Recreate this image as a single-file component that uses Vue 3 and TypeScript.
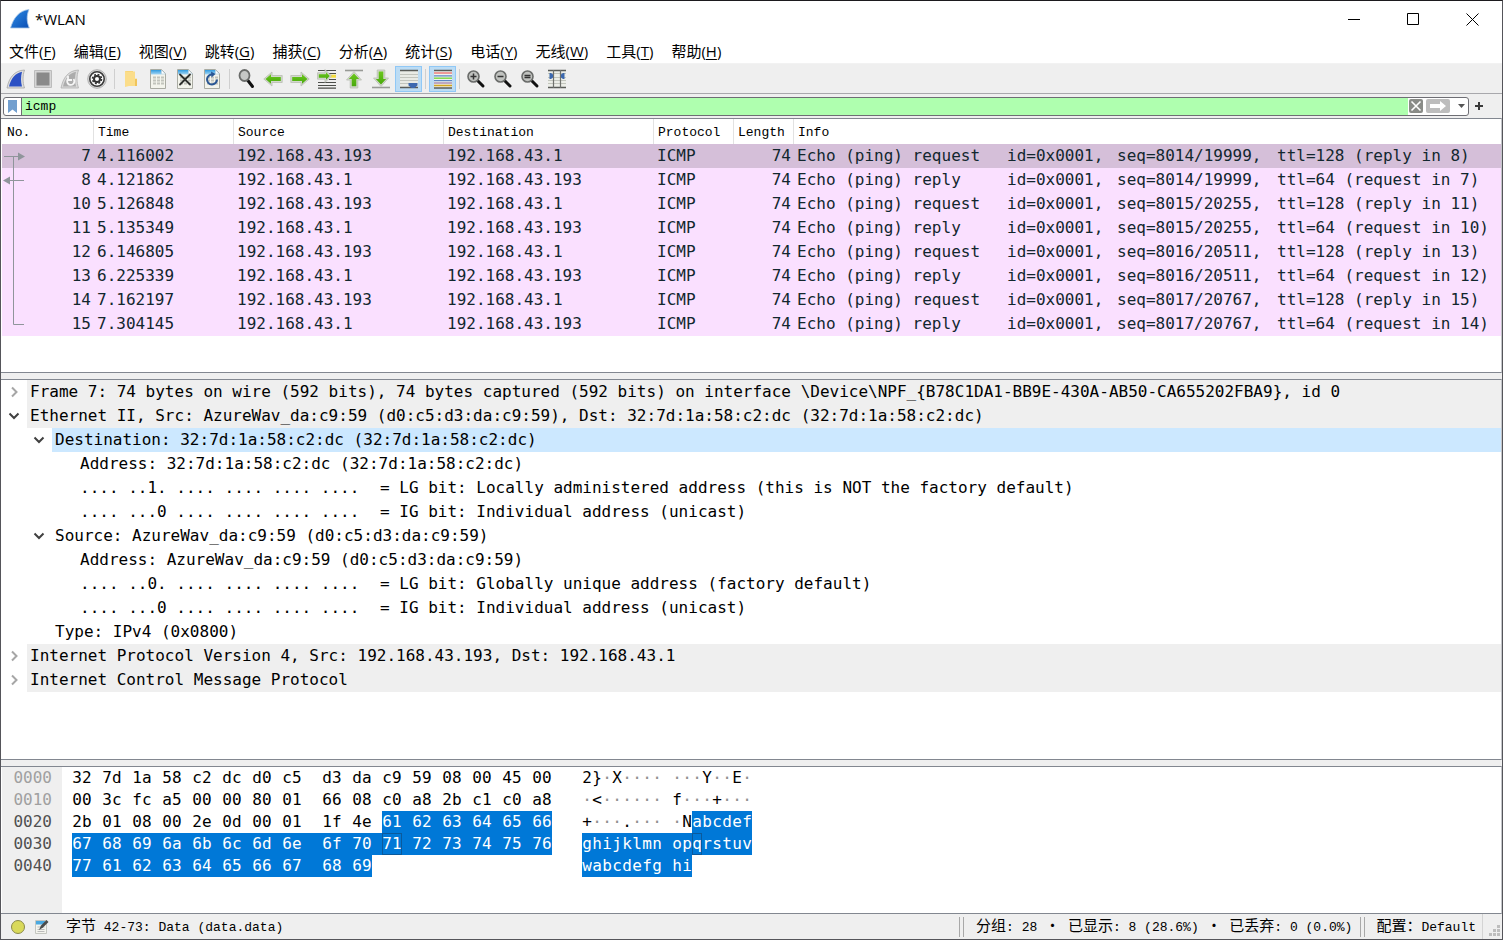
<script setup lang="ts">
import { ref } from 'vue'

interface MenuEntry { label: string; key: string }
interface Packet { no: number; time: string; src: string; dst: string; kind: string; seq: string; ttl: string }
interface TreeLine { text: string; bits?: string; depth: number; state: 'open' | 'closed' | 'leaf'; shade?: boolean; active?: boolean }
interface ByteCell { hex: string; char: string; dot: boolean; selected: boolean; joined: boolean; focus: boolean }

const menus: MenuEntry[] = [
  { label: '文件', key: 'F' },
  { label: '编辑', key: 'E' },
  { label: '视图', key: 'V' },
  { label: '跳转', key: 'G' },
  { label: '捕获', key: 'C' },
  { label: '分析', key: 'A' },
  { label: '统计', key: 'S' },
  { label: '电话', key: 'Y' },
  { label: '无线', key: 'W' },
  { label: '工具', key: 'T' },
  { label: '帮助', key: 'H' },
]

const filter = ref('icmp')

const host = '192.168.43.193'
const gateway = '192.168.43.1'

const request = (no: number, time: string, seq: string, peer: number): Packet => ({
  no, time, seq, src: host, dst: gateway, kind: 'request', ttl: `ttl=128 (reply in ${peer})`,
})
const reply = (no: number, time: string, seq: string, peer: number): Packet => ({
  no, time, seq, src: gateway, dst: host, kind: 'reply', ttl: `ttl=64 (request in ${peer})`,
})

const packets: Packet[] = [
  request(7, '4.116002', '8014/19999', 8),
  reply(8, '4.121862', '8014/19999', 7),
  request(10, '5.126848', '8015/20255', 11),
  reply(11, '5.135349', '8015/20255', 10),
  request(12, '6.146805', '8016/20511', 13),
  reply(13, '6.225339', '8016/20511', 12),
  request(14, '7.162197', '8017/20767', 15),
  reply(15, '7.304145', '8017/20767', 14),
]
const selectedNo = ref(7)

const tree: TreeLine[] = [
  { text: 'Frame 7: 74 bytes on wire (592 bits), 74 bytes captured (592 bits) on interface \\Device\\NPF_{B78C1DA1-BB9E-430A-AB50-CA655202FBA9}, id 0', depth: 0, state: 'closed', shade: true },
  { text: 'Ethernet II, Src: AzureWav_da:c9:59 (d0:c5:d3:da:c9:59), Dst: 32:7d:1a:58:c2:dc (32:7d:1a:58:c2:dc)', depth: 0, state: 'open', shade: true },
  { text: 'Destination: 32:7d:1a:58:c2:dc (32:7d:1a:58:c2:dc)', depth: 1, state: 'open', active: true },
  { text: 'Address: 32:7d:1a:58:c2:dc (32:7d:1a:58:c2:dc)', depth: 2, state: 'leaf' },
  { bits: '.... ..1. .... .... .... ....', text: '= LG bit: Locally administered address (this is NOT the factory default)', depth: 2, state: 'leaf' },
  { bits: '.... ...0 .... .... .... ....', text: '= IG bit: Individual address (unicast)', depth: 2, state: 'leaf' },
  { text: 'Source: AzureWav_da:c9:59 (d0:c5:d3:da:c9:59)', depth: 1, state: 'open' },
  { text: 'Address: AzureWav_da:c9:59 (d0:c5:d3:da:c9:59)', depth: 2, state: 'leaf' },
  { bits: '.... ..0. .... .... .... ....', text: '= LG bit: Globally unique address (factory default)', depth: 2, state: 'leaf' },
  { bits: '.... ...0 .... .... .... ....', text: '= IG bit: Individual address (unicast)', depth: 2, state: 'leaf' },
  { text: 'Type: IPv4 (0x0800)', depth: 1, state: 'leaf' },
  { text: 'Internet Protocol Version 4, Src: 192.168.43.193, Dst: 192.168.43.1', depth: 0, state: 'closed', shade: true },
  { text: 'Internet Control Message Protocol', depth: 0, state: 'closed', shade: true },
]

const bytes = (
  '32 7d 1a 58 c2 dc d0 c5 d3 da c9 59 08 00 45 00 ' +
  '00 3c fc a5 00 00 80 01 66 08 c0 a8 2b c1 c0 a8 ' +
  '2b 01 08 00 2e 0d 00 01 1f 4e 61 62 63 64 65 66 ' +
  '67 68 69 6a 6b 6c 6d 6e 6f 70 71 72 73 74 75 76 ' +
  '77 61 62 63 64 65 66 67 68 69'
).split(' ')
const dataStart = 42
const focusByte = 58

const dump = Array.from({ length: Math.ceil(bytes.length / 16) }, (_, r) => {
  const start = r * 16
  const cells: ByteCell[] = bytes.slice(start, start + 16).map((hex, i) => {
    const index = start + i
    const code = parseInt(hex, 16)
    const dot = code <= 32 || code >= 127
    return {
      hex,
      char: dot ? '·' : String.fromCharCode(code),
      dot,
      selected: index >= dataStart,
      joined: i > 0 && index > dataStart,
      focus: index === focusByte,
    }
  })
  return { offset: start.toString(16).padStart(4, '0'), current: start + 15 >= dataStart, cells }
})
</script>

<template>
  <div class="window">
    <svg class="defs" width="0" height="0" aria-hidden="true">
      <defs>
        <linearGradient id="finBlue" x1="0" y1="0" x2="1" y2="1">
          <stop offset="0" stop-color="#2f8ee6" /><stop offset="1" stop-color="#0a4db4" />
        </linearGradient>
        <linearGradient id="sheet" x1="0" y1="0" x2="0" y2="1">
          <stop offset="0" stop-color="#2f9be0" /><stop offset="1" stop-color="#a6d6f2" />
        </linearGradient>
        <linearGradient id="leaf" x1="0" y1="0" x2="0" y2="1">
          <stop offset="0" stop-color="#6cc81e" /><stop offset="1" stop-color="#48a80c" />
        </linearGradient>
        <g id="page">
          <path d="M2.500.500h11l4 4v15h-15z" fill="#f3f4ec" stroke="#a9aba2" />
          <path d="M3 1h10.500v4.500H3z" fill="url(#sheet)" />
          <path d="M13.500 1v4h4z" fill="#fff" stroke="#a9c8da" stroke-width=".6" />
        </g>
        <g id="pageGrid" fill="#c2c4bc">
          <path d="M5 7.500h3v2H5zM9 7.500h3v2H9zM13 7.500h3v2h-3zM5 10.500h3v2H5zM9 10.500h3v2H9zM13 10.500h3v2h-3zM5 13.500h3v2H5zM9 13.500h3v2H9zM13 13.500h3v2h-3z" />
        </g>
        <g id="lens">
          <path d="M11.500 11.500l5.500 5.500" stroke="#111" stroke-width="3" stroke-linecap="round" />
          <circle cx="7.500" cy="7.500" r="5.500" fill="#c0c2bf" stroke="#6a6c6a" stroke-width="1.600" />
        </g>
      </defs>
    </svg>

    <header class="titlebar">
      <svg class="logo" width="20" height="20" viewBox="0 0 20 20" aria-hidden="true">
        <path d="M.500 19C3.500 9 9 1.500 19 .500c-2.500 6-2.500 12 .300 18.500z" fill="url(#finBlue)" stroke="#a9c6e6" stroke-width=".8" />
      </svg>
      <h1>*WLAN</h1>
      <div class="controls">
        <button type="button" aria-label="最小化"><svg width="13" height="13"><path d="M0 6.500h12" /></svg></button>
        <button type="button" aria-label="最大化"><svg width="13" height="13"><path d="M.500.500h11v11h-11z" /></svg></button>
        <button type="button" aria-label="关闭"><svg width="13" height="13"><path d="M.500.500l12 12M12.500.500l-12 12" /></svg></button>
      </div>
    </header>

    <nav class="menubar">
      <button v-for="m in menus" :key="m.key" type="button">{{ m.label }}(<u>{{ m.key }}</u>)</button>
    </nav>

    <div class="toolbar" role="toolbar">
      <button type="button" aria-label="开始捕获">
        <svg viewBox="0 0 20 20"><path d="M1 19C3 9 8 1.500 18.500 1c-2 6-2 12 0 18z" fill="#dedede" stroke="#a5a5a5" stroke-width=".8" /><path d="M3 17.500C5 9.500 9.500 4 16 2.800c-1.300 5-1.300 10 0 14.700z" fill="#2b50c4" /></svg>
      </button>
      <button type="button" aria-label="停止捕获">
        <svg viewBox="0 0 20 20"><path d="M1.500 1.500h17v17h-17z" fill="#d6d6d6" stroke="#bcbcbc" /><path d="M3.500 3.500h13v13h-13z" fill="#8a8a8a" /></svg>
      </button>
      <button type="button" aria-label="重新开始">
        <svg viewBox="0 0 20 20"><path d="M1 19C3 9 8 1.500 18.500 1c-2 6-2 12 0 18z" fill="#dadada" stroke="#b0b0b0" stroke-width=".8" /><path d="M3 17.500C5 9.500 9.500 4 16 2.800c-1.300 5-1.300 10 0 14.700z" fill="#acacac" /><path d="M8.500 9.500a3.600 3.600 0 1 0 5 .500M8 7v4h4" fill="none" stroke="#f6f6f6" stroke-width="1.800" /></svg>
      </button>
      <button type="button" aria-label="捕获选项">
        <svg viewBox="0 0 20 20"><circle cx="10" cy="10" r="9.300" fill="#dcdcdc" stroke="#a2a2a2" stroke-width=".8" /><circle cx="10" cy="10" r="7.200" fill="#fff" stroke="#3a3a3a" stroke-width="1.600" /><circle cx="10" cy="10" r="4.500" fill="none" stroke="#333" stroke-width="1.600" stroke-dasharray="1.900 1.634" /><circle cx="10" cy="10" r="3" fill="none" stroke="#333" stroke-width="2" /></svg>
      </button>
      <i class="sep" />
      <button type="button" aria-label="打开">
        <svg viewBox="0 0 20 20"><path d="M4 2h8v15H4z" fill="#f5cc66" /><path d="M6 2.500h8v7h2V17H8l-4 1V2z" fill="#fbdd8a" /><path d="M14 10v7h2v-7z" fill="#f0c45a" /></svg>
      </button>
      <button type="button" aria-label="保存"><svg viewBox="0 0 20 20"><use href="#page" /><use href="#pageGrid" /></svg></button>
      <button type="button" aria-label="关闭文件">
        <svg viewBox="0 0 20 20"><use href="#page" /><use href="#pageGrid" /><path d="M5 5.500l10 10M15 5.500l-10 10" stroke="#2c2e2c" stroke-width="1.800" stroke-linecap="round" /></svg>
      </button>
      <button type="button" aria-label="重新加载">
        <svg viewBox="0 0 20 20"><use href="#page" /><use href="#pageGrid" /><path d="M10.500 5.500A5 5 0 1 0 15 10.500" fill="none" stroke="#2a5794" stroke-width="2" /><path d="M9 2.500L13.500 5 9.500 8.500z" fill="#2a5794" /></svg>
      </button>
      <i class="sep" />
      <button type="button" aria-label="查找">
        <svg viewBox="0 0 20 20"><path d="M11.500 11l5 6.500" stroke="#111" stroke-width="3" stroke-linecap="round" /><ellipse cx="8.500" cy="6.500" rx="5" ry="5.500" fill="#c6c8c6" stroke="#6a6c6a" stroke-width="1.800" /></svg>
      </button>
      <button type="button" aria-label="后退">
        <svg viewBox="0 0 20 20"><path d="M.800 10L9 3v3.500h10.200v7H9V17z" fill="#d3d8cd" stroke="#b9beb3" stroke-width=".8" stroke-linejoin="round" /><path d="M2.500 10L8 5.200V8h9.800v4H8v2.800z" fill="url(#leaf)" /></svg>
      </button>
      <button type="button" aria-label="前进">
        <svg viewBox="0 0 20 20"><path d="M19.200 10L11 3v3.500H.800v7H11V17z" fill="#d3d8cd" stroke="#b9beb3" stroke-width=".8" stroke-linejoin="round" /><path d="M17.500 10L12 5.200V8H2.200v4H12v2.800z" fill="url(#leaf)" /></svg>
      </button>
      <button type="button" aria-label="转到分组">
        <svg viewBox="0 0 20 20"><path d="M1 1.500h18M1 13.500h18M1 16.500h18M1 19.200h18" stroke="#4c4e4a" stroke-width="1.200" /><path d="M12 4.500h7M12 10.500h7" stroke="#4c4e4a" /><path d="M13 7.200h6" stroke="#f4dc3c" stroke-width="3" /><path d="M14.500 7L8 .500v3.300H.500v6.400H8v3.300z" fill="#d3d8cd" stroke="#b4b8b0" stroke-width=".7" /><path d="M12.800 7L9 3.200v2H1.800v3.600H9v2z" fill="url(#leaf)" /></svg>
      </button>
      <button type="button" aria-label="首个分组">
        <svg viewBox="0 0 20 20"><path d="M1 1.500h18" stroke="#989a96" stroke-width="1.600" /><path d="M10 2.500L2.500 11h3.700v8h7.600v-8h3.700z" fill="#d3d8cd" stroke="#b9beb3" stroke-width=".8" /><path d="M10 4.500L4.800 10h2.900v7.300h4.600V10h2.900z" fill="url(#leaf)" /></svg>
      </button>
      <button type="button" aria-label="最新分组">
        <svg viewBox="0 0 20 20"><path d="M1 18.500h18" stroke="#989a96" stroke-width="1.600" /><path d="M10 17.500L2.500 9h3.700V1h7.600v8h3.700z" fill="#d3d8cd" stroke="#b9beb3" stroke-width=".8" /><path d="M10 15.500L4.800 10h2.900V2.500h4.600V10h2.900z" fill="url(#leaf)" /></svg>
      </button>
      <button type="button" class="checked" aria-pressed="true" aria-label="自动滚动">
        <svg viewBox="0 0 20 20"><path d="M1 2h18v16H1z" fill="#e9ebe5" /><path d="M1 1.500h18M1 18.500h18" stroke="#5a5c58" stroke-width="1.300" /><path d="M1 5.500h18M1 8.500h18M1 11.500h18M1 14.500h9" stroke="#c2c5bd" /><path d="M9.500 14h9v2.500L15.500 19h-3l-3-2.500z" fill="#3c68ae" /></svg>
      </button>
      <i class="sep" />
      <button type="button" class="checked" aria-pressed="true" aria-label="着色">
        <svg viewBox="0 0 20 20"><path d="M1 1h18v18H1z" fill="#f1f3ee" /><path d="M1 1.500h18M1 19h18" stroke="#5a5c58" stroke-width="1.300" /><path d="M1 4h18" stroke="#ef6a6a" stroke-width="1.300" /><path d="M1 6.800h18M1 11.600h18" stroke="#5d86c4" stroke-width="1.200" /><path d="M1 9.200h18" stroke="#80d84a" stroke-width="1.500" /><path d="M1 14h18" stroke="#9a76a6" stroke-width="1.200" /><path d="M1 16.500h18" stroke="#d0a520" stroke-width="1.600" /></svg>
      </button>
      <i class="sep" />
      <button type="button" aria-label="放大"><svg viewBox="0 0 20 20"><use href="#lens" /><path d="M4.500 7.500h6M7.500 4.500v6" stroke="#333" stroke-width="1.500" /></svg></button>
      <button type="button" aria-label="缩小"><svg viewBox="0 0 20 20"><use href="#lens" /><path d="M4.500 7.500h6" stroke="#333" stroke-width="1.500" /></svg></button>
      <button type="button" aria-label="正常大小"><svg viewBox="0 0 20 20"><use href="#lens" /><path d="M4.500 6.500h6M4.500 8.500h6" stroke="#333" stroke-width="1.300" /></svg></button>
      <button type="button" aria-label="调整列宽">
        <svg viewBox="0 0 20 20"><path d="M1 1h18v18H1z" fill="#eceee8" /><path d="M1 1.500h18M1 18.500h18" stroke="#5a5c58" stroke-width="1.300" /><path d="M1 4.500h18M1 8.500h18M1 11.500h18M1 14.500h18" stroke="#c2c5bd" /><path d="M6.500 1v18M13.500 1v18" stroke="#6f716d" stroke-width="1.200" /><path d="M2.500 4H4l2 1.500v3L4 10H2.500zM17.500 4H16l-2 1.500v3l2 1.500h1.500z" fill="#3c68ae" /></svg>
      </button>
    </div>

    <form class="filterbar" @submit.prevent>
      <div class="filterbox">
        <button type="button" class="bookmark" aria-label="书签"><svg width="9" height="13"><path d="M0 0h9v13L4.500 9.500 0 13z" fill="#729fcf" /></svg></button>
        <input v-model="filter" type="text" aria-label="显示过滤器" spellcheck="false">
        <button type="button" class="clear" aria-label="清除"><svg width="14" height="14"><path d="M2.500 2.500l9 9M11.500 2.500l-9 9" stroke="#fff" stroke-width="1.600" /></svg></button>
        <button type="submit" class="apply" aria-label="应用"><svg width="16" height="10"><path d="M0 3h10V0l6 5-6 5V7H0z" fill="#fff" /></svg></button>
        <button type="button" class="recent" aria-label="最近的过滤器"><svg width="7" height="4"><path d="M0 0h7L3.500 4z" fill="#555" /></svg></button>
      </div>
      <button type="button" class="add" aria-label="添加过滤器"><svg width="8" height="8"><path d="M0 4h8M4 0v8" stroke="#3a3a3a" stroke-width="2" /></svg></button>
    </form>

    <main class="panes">
      <section class="pane list">
        <table>
          <colgroup>
            <col class="c-no"><col class="c-time"><col class="c-addr"><col class="c-addr"><col class="c-proto"><col class="c-len"><col>
          </colgroup>
          <thead>
            <tr><th>No.</th><th>Time</th><th>Source</th><th>Destination</th><th>Protocol</th><th>Length</th><th>Info</th></tr>
          </thead>
          <tbody>
            <tr v-for="p in packets" :key="p.no" :class="{ selected: p.no === selectedNo }" @click="selectedNo = p.no">
              <td class="num">{{ p.no }}</td>
              <td>{{ p.time }}</td>
              <td>{{ p.src }}</td>
              <td>{{ p.dst }}</td>
              <td>ICMP</td>
              <td class="num">74</td>
              <td><div class="info"><span>Echo (ping) {{ p.kind }}</span><span>id=0x0001,</span><span>seq={{ p.seq }},</span><span>{{ p.ttl }}</span></div></td>
            </tr>
          </tbody>
        </table>
        <svg class="related" width="26" height="192" aria-hidden="true">
          <path d="M2 12.500h16M11.500 12.500v168h10.500M8 36.500h14" fill="none" stroke="#8f959b" />
          <path d="M16 8.500l7 4-7 4zM8 32.500l-7 4 7 4z" fill="#8f959b" />
        </svg>
      </section>

      <section class="pane details">
        <div v-for="(line, i) in tree" :key="i" class="line" :class="['d' + line.depth, { shade: line.shade, active: line.active }]">
          <button v-if="line.state !== 'leaf'" type="button" class="toggle" :class="line.state" :aria-label="line.state === 'open' ? '折叠' : '展开'">
            <svg v-if="line.state === 'open'" width="12" height="12"><path d="M1.500 3.500L6 8l4.500-4.500" /></svg>
            <svg v-else width="12" height="12"><path d="M4 1.500L8.500 6 4 10.500" /></svg>
          </button>
          <span v-else class="toggle" />
          <span class="label"><span v-if="line.bits" class="bits">{{ line.bits }}</span>{{ line.text }}</span>
        </div>
      </section>

      <section class="pane dump">
        <div class="offsets">
          <div v-for="r in dump" :key="r.offset" :class="{ current: r.current }">{{ r.offset }}</div>
        </div>
        <div class="hex">
          <div v-for="r in dump" :key="r.offset" class="bytes">
            <span v-for="(c, i) in r.cells" :key="i" class="gap" :class="{ sel: c.joined }"><span class="byte" :class="{ sel: c.selected, focus: c.focus }">{{ c.hex }}</span></span>
          </div>
        </div>
        <div class="ascii">
          <div v-for="r in dump" :key="r.offset" class="bytes">
            <span v-for="(c, i) in r.cells" :key="i" class="gap" :class="{ sel: c.joined }"><span class="char" :class="{ sel: c.selected, focus: c.focus, dot: c.dot }">{{ c.char }}</span></span>
          </div>
        </div>
      </section>
    </main>

    <footer class="status">
      <button type="button" class="expert" aria-label="专家信息"><svg width="16" height="16"><circle cx="8" cy="8" r="6.500" fill="#d9d95a" stroke="#8a8a4a" /></svg></button>
      <button type="button" class="comment" aria-label="捕获文件注释">
        <svg width="16" height="16"><path d="M1.500 1.500h11v13h-11z" fill="#f4f4ee" stroke="#c4c6c0" /><path d="M2 2h9v3.500H2z" fill="#4aa8e0" /><path d="M3.500 8h7M3.500 10.500h7M3.500 12.500h7" stroke="#bbb" /><path d="M5 11l2-4.500L12.500 1l2 2L9 8.500z" fill="#4a4c4a" /></svg>
      </button>
      <span class="field"><b>字节</b> 42-73: Data (data.data)</span>
      <i class="grip" />
      <span class="counts"><b>分组</b>: 28 <b class="mid">·</b> <b>已显示</b>: 8 (28.6%) <b class="mid">·</b> <b>已丢弃</b>: 0 (0.0%)</span>
      <i class="grip" />
      <button type="button" class="profile"><b>配置：</b>Default</button>
      <svg class="sizer" width="11" height="11"><path d="M8 0h3v3H8zM4 4h3v3H4zM8 4h3v3H8zM0 8h3v3H0zM4 8h3v3H4zM8 8h3v3H8z" fill="#bdbdbd" /></svg>
    </footer>
  </div>
</template>

<style>
body {
  margin: 0;
}
</style>

<style scoped>
* {
  box-sizing: border-box;
}
.window {
  display: flex;
  flex-direction: column;
  height: 100vh;
  border: 1px solid #55555a;
  border-top-color: #1c1a1e;
  background: #efefef;
  color: #000;
  overflow: hidden;
  font: 15px/20px "Open Sans", "Noto Sans CJK SC", sans-serif;
}
.defs {
  position: absolute;
}
button {
  display: flex;
  align-items: center;
  justify-content: center;
  margin: 0;
  padding: 0;
  border: 0;
  background: none;
  color: inherit;
  font: inherit;
}
svg {
  display: block;
  flex: none;
}

.titlebar {
  display: flex;
  align-items: center;
  height: 36px;
  flex: none;
  padding-left: 9px;
  background: #fff;
}
.titlebar h1 {
  flex: 1;
  margin: 0 0 0 5px;
  font-size: 15px;
  font-weight: 400;
}
.controls {
  display: flex;
}
.controls button {
  width: 59px;
  height: 36px;
}
.controls svg {
  fill: none;
  stroke: #000;
}

.menubar {
  display: flex;
  gap: 18px;
  flex: none;
  height: 27px;
  padding: 2px 0 0 8px;
  background: #fff;
  border-bottom: 1px solid #f2f2f2;
}
.menubar button {
  display: block;
  white-space: nowrap;
}
.menubar u {
  text-underline-offset: 2px;
}

.toolbar {
  display: flex;
  align-items: center;
  flex: none;
  height: 30px;
  padding-left: 2px;
  border-bottom: 1px solid #a8a8ac;
}
.toolbar button {
  justify-content: flex-start;
  width: 27px;
  height: 26px;
  padding-left: 3px;
}
.toolbar svg {
  width: 20px;
  height: 20px;
}
.toolbar .checked {
  padding-left: 3px;
  background: #bcdcf4;
  border: 1px solid #90c8f6;
}
.sep {
  width: 1px;
  height: 20px;
  margin: 0 3px;
  background: #cfcfcf;
}

.filterbar {
  display: flex;
  align-items: center;
  flex: none;
  height: 24px;
  padding-left: 2px;
}
.filterbox {
  display: flex;
  align-items: center;
  flex: 1;
  height: 19px;
  border: 1px solid #6e6e74;
  border-radius: 3px;
  background: #fff;
  overflow: hidden;
}
.bookmark {
  width: 18px;
  height: 17px;
  border-right: 1px solid #6e6e74;
}
.filterbox input {
  flex: 1;
  min-width: 0;
  height: 17px;
  padding: 0 3px;
  border: 0;
  outline: 0;
  background: #afffaf;
  color: #000;
  font: 13px/17px "Liberation Mono", monospace;
}
.clear {
  width: 14px;
  height: 14px;
  margin: 0 3px 0 1px;
  border-radius: 2px;
  background: #8a8c88;
}
.apply {
  width: 24px;
  height: 14px;
  border-radius: 2px;
  background: #bdbdbd;
}
.recent {
  width: 18px;
  height: 17px;
  padding-left: 4px;
}
.add {
  width: 33px;
  height: 20px;
  padding-right: 13px;
}

.panes {
  display: flex;
  flex-direction: column;
  flex: 1;
  gap: 6px;
  min-height: 0;
}
.pane {
  position: relative;
  min-height: 0;
  padding-left: 1px;
  border: 1px solid #828790;
  border-left-width: 0;
  border-right-color: #c4c6ca;
  background: #fff;
  overflow: hidden;
  font: 16px/24px "DejaVu Sans Mono", monospace;
}
.list {
  flex: 255 1 0;
}
.details {
  flex: 381 1 0;
}
.dump {
  flex: 147 1 0;
}

table {
  width: 100%;
  table-layout: fixed;
  border-collapse: collapse;
}
.c-no {
  width: 91px;
}
.c-time {
  width: 140px;
}
.c-addr {
  width: 210px;
}
.c-proto {
  width: 80px;
}
.c-len {
  width: 60px;
}
th {
  height: 25px;
  padding: 2px 0 0 5px;
  box-shadow: inset 1px 0 #e2e2e2;
  font: 13px/22px "Liberation Mono", monospace;
  text-align: left;
}
th:first-child {
  box-shadow: none;
}
td {
  height: 24px;
  padding: 0 0 0 4px;
  white-space: pre;
}
.num {
  padding-right: 2px;
  text-align: right;
}
.info {
  display: grid;
  grid-template-columns: 210px 110px 160px auto;
}
tbody tr {
  background: #fae0ff;
  color: #12272e;
}
tbody tr.selected {
  background: #d5bfd9;
}
.related {
  position: absolute;
  left: 1px;
  top: 25px;
}

.line {
  display: flex;
  height: 24px;
}
.d1 {
  padding-left: 25px;
}
.d2 {
  padding-left: 50px;
}
.toggle {
  width: 25px;
  height: 24px;
  padding-right: 1px;
}
.toggle svg {
  fill: none;
  stroke: #404040;
  stroke-width: 2;
}
.toggle.closed svg {
  stroke: #a6a6a6;
}
.label {
  flex: 1;
  padding-left: 3px;
  white-space: pre;
}
.bits {
  display: inline-block;
  width: 300px;
}
.shade .label {
  background: #efefef;
}
.active .label {
  background: #cce8ff;
}

.dump {
  display: flex;
  line-height: 22px;
}
.offsets {
  width: 60px;
  padding-right: 10px;
  background: #efefef;
  color: #a0a0a0;
  text-align: right;
}
.offsets .current {
  color: #505050;
}
.hex {
  width: 490px;
  margin-right: 30px;
}
.bytes {
  display: flex;
  height: 22px;
}
.hex .gap {
  padding-left: 10px;
}
.hex .gap:nth-child(9) {
  padding-left: 20px;
}
.ascii .gap:nth-child(9) {
  padding-left: 10px;
}
.byte,
.char {
  display: block;
  width: 20px;
  height: 22px;
  text-align: center;
}
.char {
  width: 10px;
}
.dot {
  color: #909090;
}
.sel {
  background: #0078d7;
  color: #fff;
}
.focus {
  outline: 1px solid #0a5a9c;
  outline-offset: -1px;
}

.status {
  display: flex;
  align-items: center;
  flex: none;
  height: 25px;
  padding: 0 2px 0 9px;
  font: 13px/24px "Liberation Mono", "Noto Sans CJK SC", monospace;
  white-space: pre;
}
.status b {
  font: 15px/24px "Noto Sans CJK SC", sans-serif;
}
.status .mid {
  display: inline-block;
  width: 15px;
  text-align: center;
}
.comment {
  margin: 0 16px 0 8px;
}
.field {
  flex: 1;
}
.grip {
  width: 5px;
  height: 20px;
  border: solid #a8a8a8;
  border-width: 0 1px;
}
.counts {
  margin: 0 8px 0 12px;
}
.profile {
  display: block;
  margin-left: 11px;
  padding-right: 6px;
  border-right: 1px solid #d4d4d4;
}
.sizer {
  align-self: flex-end;
  margin: 0 0 3px 6px;
}
</style>
